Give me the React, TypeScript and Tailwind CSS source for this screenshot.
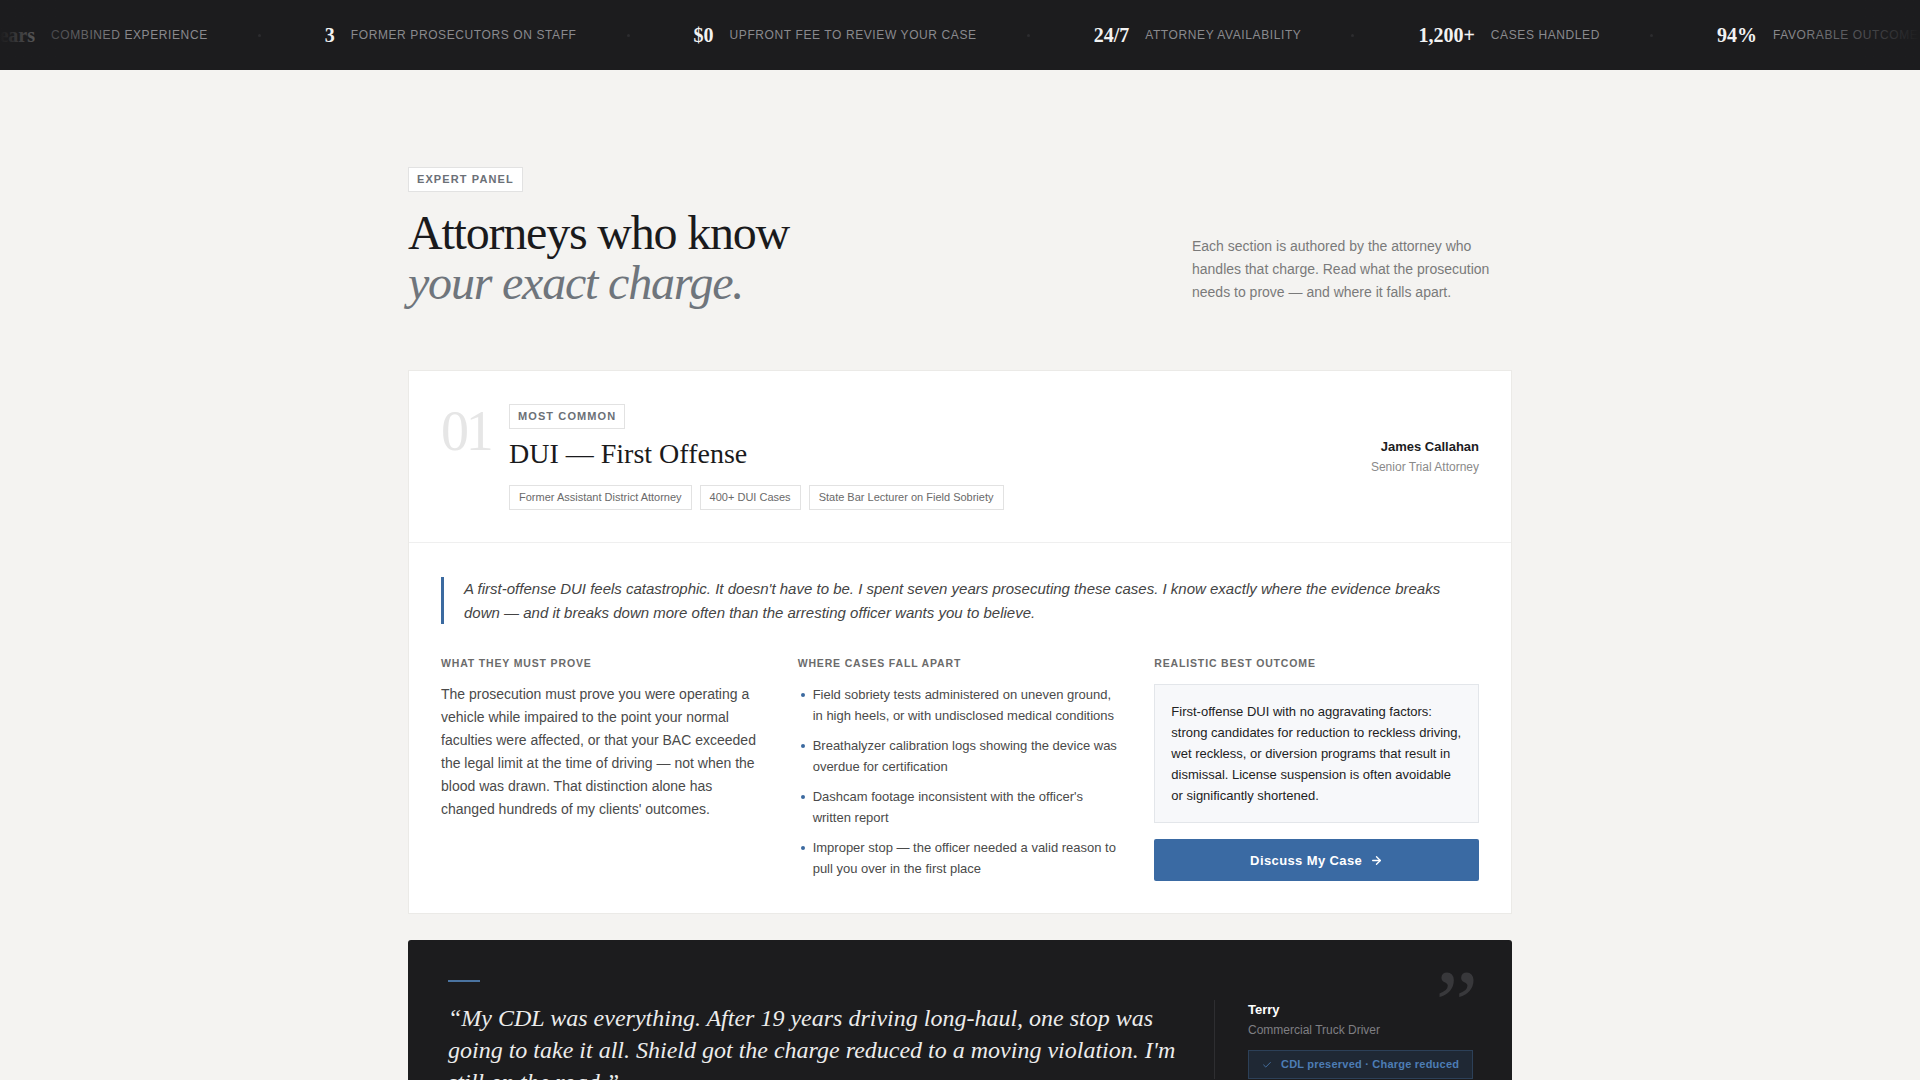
import React from 'react';
import { ArrowRight, Check } from 'lucide-react';

const serif = "font-['Liberation_Serif','Times_New_Roman',serif]";
const sans = "font-['Liberation_Sans',Arial,sans-serif]";

const stats = [
  { value: '40+ Years', label: 'Combined Experience' },
  { value: '3', label: 'Former Prosecutors on Staff' },
  { value: '$0', label: 'Upfront Fee to Review Your Case' },
  { value: '24/7', label: 'Attorney Availability' },
  { value: '1,200+', label: 'Cases Handled' },
  { value: '94%', label: 'Favorable Outcomes' },
  { value: '40+ Years', label: 'Combined Experience' },
];

const credentials = [
  'Former Assistant District Attorney',
  '400+ DUI Cases',
  'State Bar Lecturer on Field Sobriety',
];

const weakPoints = [
  'Field sobriety tests administered on uneven ground, in high heels, or with undisclosed medical conditions',
  'Breathalyzer calibration logs showing the device was overdue for certification',
  "Dashcam footage inconsistent with the officer's written report",
  'Improper stop — the officer needed a valid reason to pull you over in the first place',
];

const StatsTicker = () => (
  <div className="relative h-[70px] bg-[#1c1c1e] overflow-hidden flex items-center">
    <div className="flex items-center whitespace-nowrap">
      {stats.map((s, i) => (
        <div key={i} className="flex items-center shrink-0">
          {i > 0 && <span className="ml-[50px] mr-[64px] w-[3px] h-[3px] rounded-full bg-[#2c2c2f]" />}
          <div className="flex items-center gap-4">
            <span
              className={`${serif} text-[20px] font-semibold text-[#f2f2f2] leading-none ${
                i === 0 ? 'w-[35px] overflow-hidden flex justify-end' : ''
              }`}
            >
              <span className="shrink-0">{s.value}</span>
            </span>
            <span className={`${sans} text-[12px] uppercase tracking-[0.05em] text-[#8a8a8e]`}>{s.label}</span>
          </div>
        </div>
      ))}
    </div>
    <div className="absolute inset-y-0 left-0 w-[130px] bg-linear-to-r from-[#1c1c1e] to-transparent pointer-events-none" />
    <div className="absolute inset-y-0 right-0 w-[130px] bg-linear-to-l from-[#1c1c1e] to-transparent pointer-events-none" />
  </div>
);

const Tag = ({ children, strong }: { children: React.ReactNode; strong?: boolean }) => (
  <span
    className={`inline-flex items-center border border-[#e2e2e2] bg-white leading-[13px] py-[5px] ${
      strong
        ? 'px-2 text-[11px] font-bold uppercase tracking-[0.1em] text-[#6b7077]'
        : 'px-[9px] text-[11px] text-[#6a6a6a]'
    }`}
  >
    {children}
  </span>
);

const ColumnHeading = ({ children }: { children: React.ReactNode }) => (
  <h4 className="text-[10.5px] font-bold uppercase tracking-[0.08em] leading-[14px] text-[#6b6b6b] mb-[14px]">
    {children}
  </h4>
);

export default function App() {
  return (
    <div className={`${sans} min-h-screen bg-[#f4f3f1]`}>
      <StatsTicker />

      <div className="mx-auto w-[1104px] pt-24 pb-24">
        {/* Section header */}
        <div className="flex items-end justify-between">
          <div>
            <Tag strong>Expert Panel</Tag>
            <h2 className={`${serif} mt-4 text-[48px] leading-[1.05] tracking-[-0.025em] text-[#1a1a1c]`}>
              Attorneys who know
              <br />
              <em className="text-[#6f757c]">your exact charge.</em>
            </h2>
          </div>
          <p className="w-[320px] pb-[4px] text-[14px] leading-[23.3px] text-[#7a7a7a]">
            Each section is authored by the attorney who handles that charge. Read what the prosecution needs to
            prove — and where it falls apart.
          </p>
        </div>

        {/* Charge card */}
        <article className="mt-[61px] bg-white border border-[#ebeae7]">
          <header className="flex items-center justify-between p-8 border-b border-[#efefef]">
            <div className="flex items-start">
              <span className={`${serif} w-[68px] shrink-0 text-[56px] leading-none tracking-[-0.06em] text-[#e6e6e6]`}>
                01
              </span>
              <div>
                <Tag strong>Most Common</Tag>
                <h3 className={`${serif} mt-[8px] text-[28px] leading-[1.2] text-[#1a1a1c]`}>DUI — First Offense</h3>
                <div className="mt-[15px] flex gap-2">
                  {credentials.map((c) => (
                    <Tag key={c}>{c}</Tag>
                  ))}
                </div>
              </div>
            </div>
            <div className="text-right">
              <div className="text-[13px] font-bold text-[#1c1c1e]">James Callahan</div>
              <div className="mt-[1px] text-[12px] text-[#8a8a8a]">Senior Trial Attorney</div>
            </div>
          </header>

          <div className="px-8 pt-[34px] pb-8">
            <blockquote className="border-l-[3px] border-[#3b6aa0] pl-5 text-[15px] italic leading-[23.5px] text-[#444]">
              A first-offense DUI feels catastrophic. It doesn't have to be. I spent seven years prosecuting these
              cases. I know exactly where the evidence breaks down — and it breaks down more often than the arresting
              officer wants you to believe.
            </blockquote>

            <div className="mt-8 grid grid-cols-3 gap-8">
              <div>
                <ColumnHeading>What they must prove</ColumnHeading>
                <p className="-mt-px text-[14px] leading-[23px] text-[#4a4a4a]">
                  The prosecution must prove you were operating a vehicle while impaired to the point your normal
                  faculties were affected, or that your BAC exceeded the legal limit at the time of driving — not when
                  the blood was drawn. That distinction alone has changed hundreds of my clients' outcomes.
                </p>
              </div>

              <div>
                <ColumnHeading>Where cases fall apart</ColumnHeading>
                <ul className="space-y-[9px]">
                  {weakPoints.map((w) => (
                    <li key={w} className="flex text-[13px] leading-[21px] text-[#4a4a4a]">
                      <span className="mt-[9px] ml-[3px] mr-[8px] w-[4px] h-[4px] shrink-0 rounded-full bg-[#3b6aa0]" />
                      <span>{w}</span>
                    </li>
                  ))}
                </ul>
              </div>

              <div>
                <ColumnHeading>Realistic best outcome</ColumnHeading>
                <div className="bg-[#f7f8fa] border border-[#e3e6ea] py-4 pl-4 pr-3 text-[13px] leading-[21px] text-[#222]">
                  First-offense DUI with no aggravating factors:
                  <br />
                  strong candidates for reduction to reckless driving, wet reckless, or diversion programs that result
                  in dismissal. License suspension is often avoidable or significantly shortened.
                </div>
                <button className="mt-4 w-full h-[42px] rounded-[2px] bg-[#3a6aa3] text-white text-[13px] font-bold tracking-[0.03em] flex items-center justify-center gap-2">
                  Discuss My Case
                  <ArrowRight size={13} strokeWidth={2.5} />
                </button>
              </div>
            </div>
          </div>
        </article>

        {/* Client testimonial */}
        <section className="relative mt-[26px] bg-[#1c1c1e] rounded-[3px] p-10">
          <span className={`${serif} absolute top-[16px] right-[34px] text-[96px] leading-none text-[#38383b] select-none`}>
            ”
          </span>
          <div className="grid grid-cols-[1fr_258px] gap-8 items-center">
            <div>
              <div className="w-8 h-[2px] bg-[#4a73a0]" />
              <p className={`${serif} mt-5 text-[24px] italic leading-[32px] text-[#ececec]`}>
                “My CDL was everything. After 19 years driving long-haul, one stop was going to take it all. Shield got
                the charge reduced to a moving violation. I'm still on the road.”
              </p>
            </div>
            <div className="border-l border-[#2e2e31] pl-[33px]">
              <div className="text-[13px] font-bold text-white">Terry</div>
              <div className="mt-[2px] text-[12px] text-[#7f7f83]">Commercial Truck Driver</div>
              <div className="mt-[11px] inline-flex items-center gap-[9px] h-[29px] px-[13px] whitespace-nowrap bg-[#1f2834] border border-[#2c4058] text-[11px] font-bold tracking-[0.02em] text-[#4d7db5]">
                <Check size={10} strokeWidth={2} className="shrink-0" />
                CDL preserved · Charge reduced
              </div>
            </div>
          </div>
        </section>
      </div>
    </div>
  );
}
